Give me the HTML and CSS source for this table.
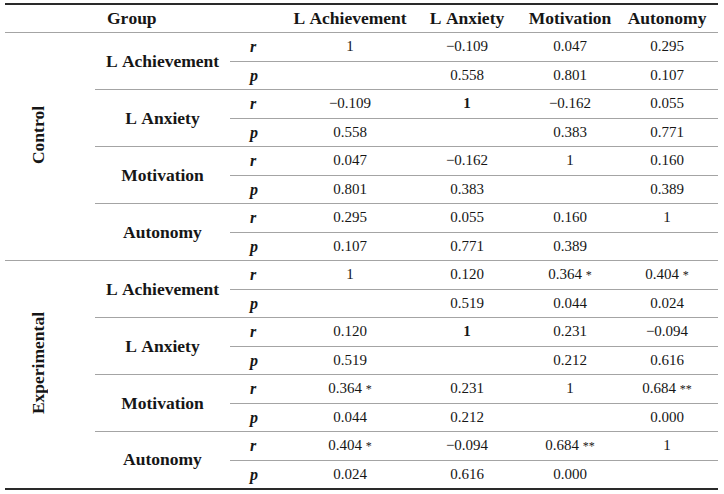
FILE: index.html
```html
<!DOCTYPE html>
<html>
<head>
<meta charset="utf-8">
<link rel="stylesheet" href="styles.css">
</head>
<body>
<table class="corr">
  <colgroup>
    <col class="c-cond"><col class="c-group"><col class="c-stat">
    <col class="c-v1"><col class="c-v2"><col class="c-v3"><col class="c-v4">
  </colgroup>
  <thead>
    <tr class="head">
      <th colspan="3" class="h-group">Group</th>
      <th>L Achievement</th>
      <th>L Anxiety</th>
      <th>Motivation</th>
      <th>Autonomy</th>
    </tr>
  </thead>
  <tbody>
    <tr class="r">
      <td rowspan="8" class="cond"><span class="vert">Control</span></td>
      <td rowspan="2" class="grp">L Achievement</td>
      <td class="stat">r</td><td>1</td><td>−0.109</td><td>0.047</td><td>0.295</td>
    </tr>
    <tr class="p"><td class="stat">p</td><td></td><td>0.558</td><td>0.801</td><td>0.107</td></tr>
    <tr class="r">
      <td rowspan="2" class="grp">L Anxiety</td>
      <td class="stat">r</td><td>−0.109</td><td class="b">1</td><td>−0.162</td><td>0.055</td>
    </tr>
    <tr class="p"><td class="stat">p</td><td>0.558</td><td></td><td>0.383</td><td>0.771</td></tr>
    <tr class="r">
      <td rowspan="2" class="grp">Motivation</td>
      <td class="stat">r</td><td>0.047</td><td>−0.162</td><td>1</td><td>0.160</td>
    </tr>
    <tr class="p"><td class="stat">p</td><td>0.801</td><td>0.383</td><td></td><td>0.389</td></tr>
    <tr class="r">
      <td rowspan="2" class="grp">Autonomy</td>
      <td class="stat">r</td><td>0.295</td><td>0.055</td><td>0.160</td><td>1</td>
    </tr>
    <tr class="p"><td class="stat">p</td><td>0.107</td><td>0.771</td><td>0.389</td><td></td></tr>
  </tbody>
  <tbody>
    <tr class="r">
      <td rowspan="8" class="cond"><span class="vert">Experimental</span></td>
      <td rowspan="2" class="grp">L Achievement</td>
      <td class="stat">r</td><td>1</td><td>0.120</td><td>0.364 <span class="sig">*</span></td><td>0.404 <span class="sig">*</span></td>
    </tr>
    <tr class="p"><td class="stat">p</td><td></td><td>0.519</td><td>0.044</td><td>0.024</td></tr>
    <tr class="r">
      <td rowspan="2" class="grp">L Anxiety</td>
      <td class="stat">r</td><td>0.120</td><td class="b">1</td><td>0.231</td><td>−0.094</td>
    </tr>
    <tr class="p"><td class="stat">p</td><td>0.519</td><td></td><td>0.212</td><td>0.616</td></tr>
    <tr class="r">
      <td rowspan="2" class="grp">Motivation</td>
      <td class="stat">r</td><td>0.364 <span class="sig">*</span></td><td>0.231</td><td>1</td><td>0.684 <span class="sig">**</span></td>
    </tr>
    <tr class="p"><td class="stat">p</td><td>0.044</td><td>0.212</td><td></td><td>0.000</td></tr>
    <tr class="r">
      <td rowspan="2" class="grp">Autonomy</td>
      <td class="stat">r</td><td>0.404 <span class="sig">*</span></td><td>−0.094</td><td>0.684 <span class="sig">**</span></td><td>1</td>
    </tr>
    <tr class="p"><td class="stat">p</td><td>0.024</td><td>0.616</td><td>0.000</td><td></td></tr>
  </tbody>
</table>
</body>
</html>
```
FILE: styles.css
```css
html, body {
  margin: 0;
  padding: 0;
  background: #ffffff;
}
body {
  padding: 3px 0 0 5px;
  font-family: "Liberation Serif", "Times New Roman", serif;
  font-kerning: none;
  color: #161616;
}
.corr {
  border-collapse: collapse;
  table-layout: fixed;
  width: 713px;
  font-size: 15px;
  border-top: 2px solid #2a2a2a;
  border-bottom: 2px solid #2a2a2a;
}
.c-cond { width: 90px; }
.c-group { width: 135px; }
.c-stat { width: 60px; }
.c-v1 { width: 120px; }
.c-v2 { width: 114px; }
.c-v3 { width: 92px; }
.c-v4 { width: 102px; }

.corr th, .corr td {
  padding: 0;
  text-align: center;
  vertical-align: middle;
  line-height: 17px;
}
.head { height: 29px; }
.head th {
  font-weight: bold;
  font-size: 17.5px;
  border-bottom: 1px solid #a4a4a4;
}
.corr th.h-group {
  text-align: left;
  padding-left: 102px;
}
.corr tr { height: 28.5px; }
.corr tr.r td,
.corr tr.p td {
  border-bottom: 1px solid #a4a4a4;
}
.corr td.cond {
  border-bottom: 1px solid #a4a4a4;
  padding-right: 24px;
  padding-bottom: 18px;
}
.corr td.grp {
  font-weight: bold;
  font-size: 17.5px;
}
.corr td.stat {
  font-weight: bold;
  font-style: italic;
  font-size: 16px;
  text-align: left;
  padding-left: 20px;
}
.corr td.b { font-weight: bold; }
.vert {
  display: inline-block;
  writing-mode: vertical-rl;
  transform: rotate(180deg);
  font-weight: bold;
  font-size: 17.5px;
}
.sig { font-size: 12px; }
```
